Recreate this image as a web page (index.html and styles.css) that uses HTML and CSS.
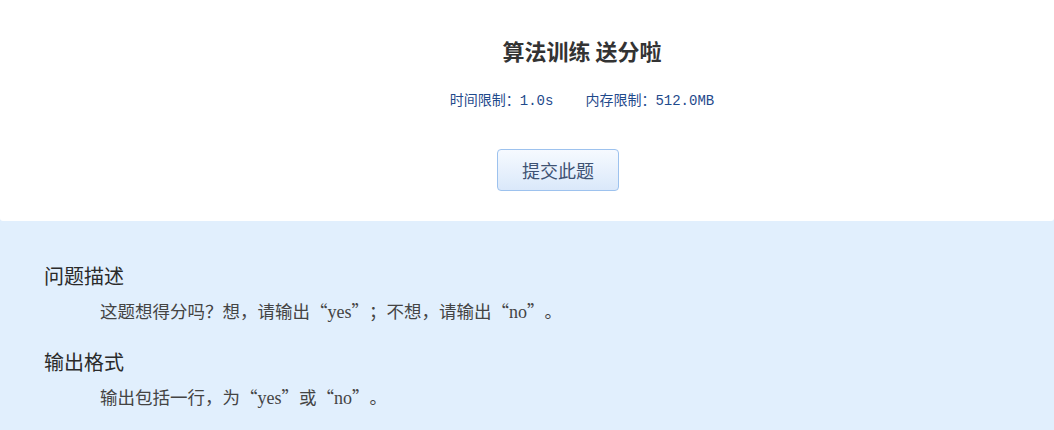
FILE: index.html
```html
<!DOCTYPE html>
<html lang="zh-CN">
<head>
<meta charset="utf-8">
<title>算法训练 送分啦</title>
<link rel="stylesheet" href="styles.css">
</head>
<body>
<div class="page">
  <section class="header">
    <h1 class="title">算法训练 送分啦</h1>
    <div class="limits">
      <span class="limit">时间限制：1.0s</span>
      <span class="limit">内存限制：512.0MB</span>
    </div>
    <div class="actions">
      <button class="submit">提交此题</button>
    </div>
  </section>
  <section class="content">
    <h2 class="sec-title">问题描述</h2>
    <p class="sec-text">这题想得分吗？想，请输出“<span class="en">yes</span>”；不想，请输出“<span class="en">no</span>”。</p>
    <h2 class="sec-title">输出格式</h2>
    <p class="sec-text">输出包括一行，为“<span class="en">yes</span>”或“<span class="en">no</span>”。</p>
  </section>
</div>
</body>
</html>
```

FILE: styles.css
```css
html, body {
  margin: 0;
  padding: 0;
}
body {
  background: #e1effd;
  font-family: "Noto Sans CJK SC", "Noto Sans", sans-serif;
  width: 1054px;
  height: 430px;
  overflow: hidden;
}
.page {
  display: flex;
  flex-direction: column;
}
.header {
  background: #ffffff;
  height: 221px;
  box-sizing: border-box;
  padding-top: 35px;
  border-radius: 0 0 3px 3px;
}
.title {
  margin: 0;
  padding-left: 110px;
  text-align: center;
  font-size: 22px;
  line-height: 30px;
  font-weight: 700;
  color: #333333;
}
.limits {
  margin-top: 26px;
  padding-left: 110px;
  display: flex;
  justify-content: center;
  gap: 32px;
  font-family: "Liberation Mono", "Noto Sans CJK TC", monospace;
  font-size: 14px;
  line-height: 20px;
  color: #1f4a8c;
  text-spacing-trim: space-all;
}
.actions {
  margin-top: 38px;
  padding-left: 62px;
  display: flex;
  justify-content: center;
}
.submit {
  width: 122px;
  height: 42px;
  box-sizing: border-box;
  border: 1px solid #9dc2ee;
  border-radius: 4px;
  background: linear-gradient(#f6faff, #dae8fa);
  font-family: "Noto Sans CJK SC", sans-serif;
  font-size: 18px;
  color: #3e5273;
  padding: 0;
}
.content {
  padding: 41px 44px 0;
}
.sec-title {
  margin: 0;
  font-size: 20px;
  line-height: 28px;
  font-weight: 400;
  color: #2a2a2a;
}
.sec-text {
  margin: 9px 0 24px;
  padding-left: 56px;
  font-size: 17.5px;
  line-height: 24px;
  color: #444444;
  font-feature-settings: "fwid";
  text-spacing-trim: space-all;
}
.en {
  font-family: "Liberation Serif", serif;
  font-size: 18px;
  font-feature-settings: normal;
}
```
